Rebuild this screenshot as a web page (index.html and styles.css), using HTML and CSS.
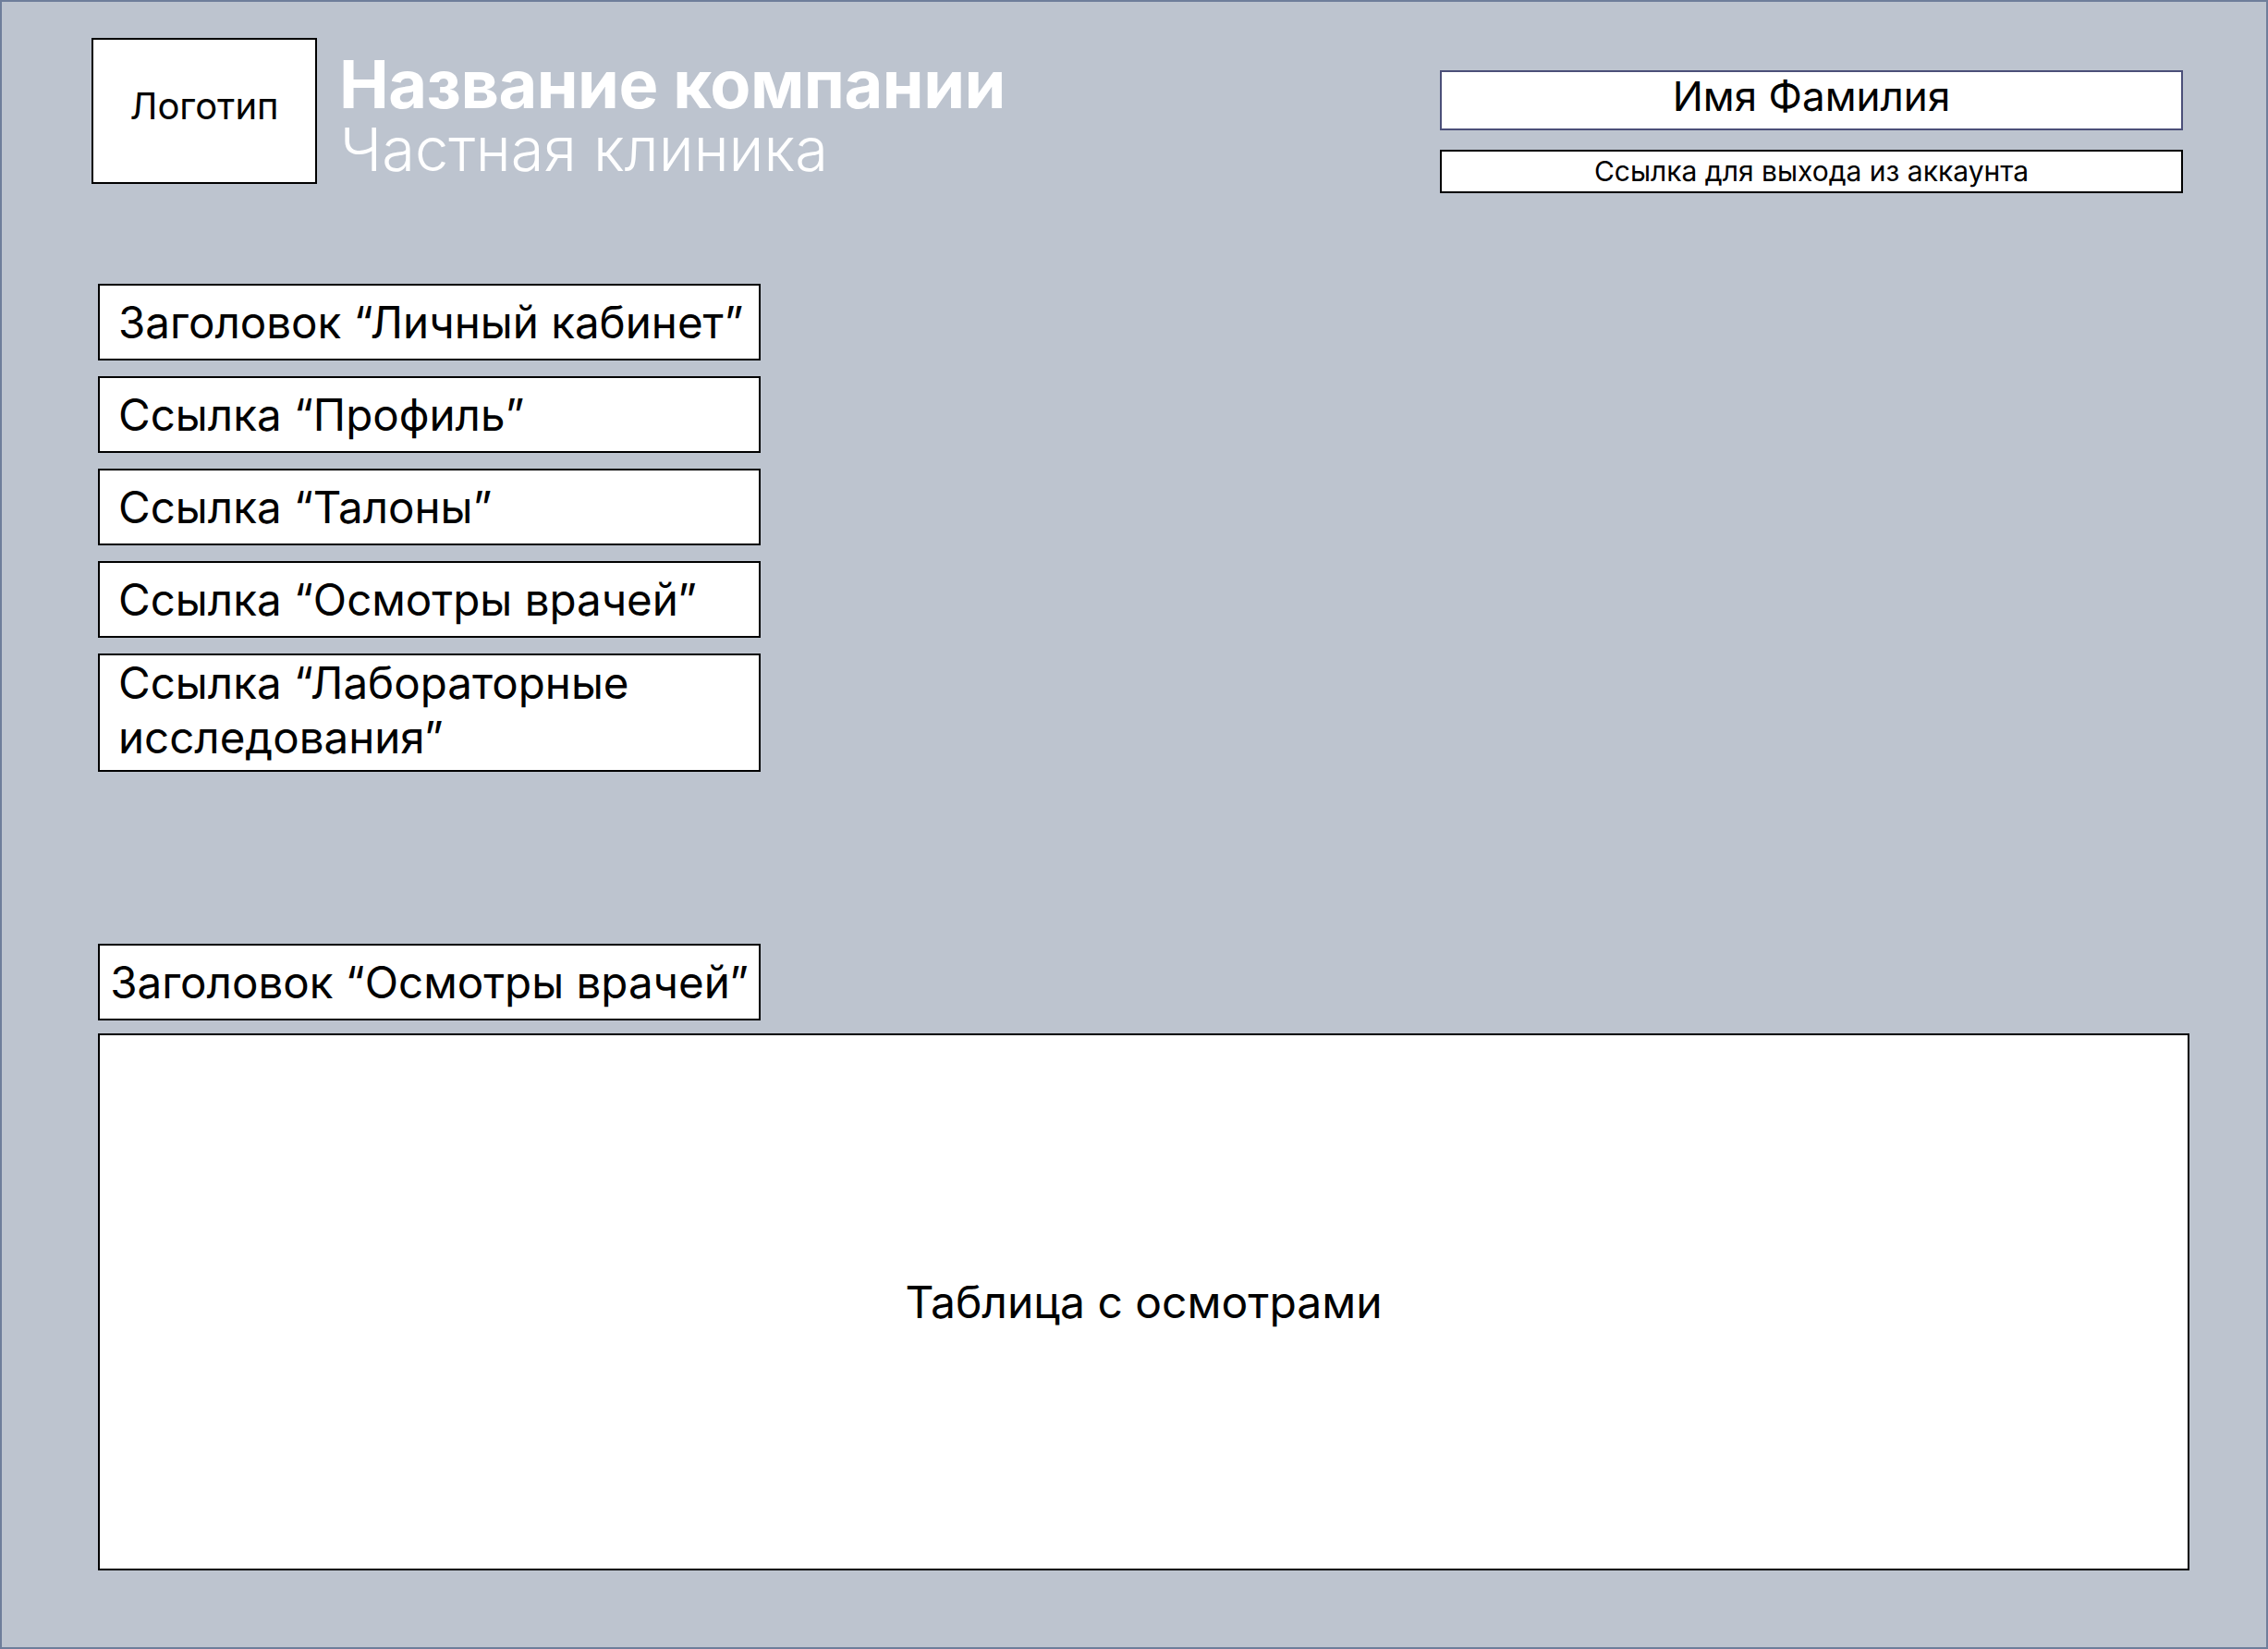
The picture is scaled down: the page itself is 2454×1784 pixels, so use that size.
FILE: index.html
```html
<!DOCTYPE html>
<html lang="ru">
<head>
<meta charset="utf-8">
<title>Личный кабинет</title>
<link rel="stylesheet" href="styles.css">
</head>
<body>
<div class="page">
  <header class="header">
    <div class="brand">
      <div class="logo">Логотип</div>
      <div class="brand-text">
        <div class="company">Название компании</div>
        <div class="tagline">Частная клиника</div>
      </div>
    </div>
    <div class="account">
      <div class="user-name">Имя Фамилия</div>
      <a class="logout" href="#">Ссылка для выхода из аккаунта</a>
    </div>
  </header>
  <main class="main">
    <nav class="sidebar">
      <div class="box box-single">Заголовок “Личный кабинет”</div>
      <a class="box box-single" href="#">Ссылка “Профиль”</a>
      <a class="box box-single" href="#">Ссылка “Талоны”</a>
      <a class="box box-single" href="#">Ссылка “Осмотры врачей”</a>
      <a class="box box-double" href="#">Ссылка “Лабораторные исследования”</a>
    </nav>
    <section class="exams">
      <h2 class="box box-single section-title">Заголовок “Осмотры врачей”</h2>
      <div class="table-placeholder">Таблица с осмотрами</div>
    </section>
  </main>
</div>
</body>
</html>
```
FILE: styles.css
```css
* {
  box-sizing: border-box;
}

html, body {
  margin: 0;
  padding: 0;
}

body {
  font-family: Inter, "Noto Sans", sans-serif;
  color: #000;
}

.page {
  width: 2454px;
  height: 1784px;
  background: #bdc4cf;
  border: 2px solid #6e7e9b;
  display: flex;
  flex-direction: column;
}

.header {
  display: flex;
  justify-content: space-between;
  align-items: flex-start;
  padding: 39px 90px 0 97px;
}

.brand {
  display: flex;
  align-items: flex-start;
  gap: 24px;
}

.logo {
  width: 244px;
  height: 158px;
  background: #fff;
  border: 2px solid #000;
  display: flex;
  align-items: center;
  justify-content: center;
  font-size: 40px;
  padding-bottom: 12px;
}

.brand-text {
  display: flex;
  flex-direction: column;
  margin-top: 12px;
  color: #fff;
}

.company {
  font-size: 72px;
  font-weight: 700;
  line-height: 76px;
  letter-spacing: -0.5px;
}

.tagline {
  font-size: 65px;
  font-weight: 300;
  line-height: 66px;
  margin-left: 1px;
}

.account {
  width: 804px;
  margin-top: 35px;
  display: flex;
  flex-direction: column;
  gap: 21px;
}

.user-name {
  height: 65px;
  background: #fff;
  border: 2px solid #4b4f79;
  text-align: center;
  font-size: 44px;
  line-height: 53px;
}

.logout {
  height: 47px;
  background: #fff;
  border: 2px solid #000;
  text-align: center;
  font-size: 30px;
  line-height: 36px;
  padding-top: 3px;
  color: #000;
  text-decoration: none;
}

.main {
  padding: 0 83px 0 104px;
  display: flex;
  flex-direction: column;
}

.sidebar {
  margin-top: 98px;
  width: 717px;
  display: flex;
  flex-direction: column;
  gap: 17px;
}

.box {
  display: block;
  background: #fff;
  border: 2px solid #000;
  color: #000;
  text-decoration: none;
  font-size: 47.5px;
  font-weight: 400;
  margin: 0;
}

.box-single {
  height: 83px;
  line-height: 79px;
  padding: 0 20px;
  white-space: nowrap;
}

.box-double {
  height: 128px;
  line-height: 59px;
  padding: 0 20px;
}

.exams {
  margin-top: 186px;
  display: flex;
  flex-direction: column;
  gap: 14px;
}

.section-title {
  width: 717px;
  padding: 0;
  text-align: center;
}

.table-placeholder {
  height: 581px;
  background: #fff;
  border: 2px solid #000;
  display: flex;
  align-items: center;
  justify-content: center;
  font-size: 48px;
}
```
